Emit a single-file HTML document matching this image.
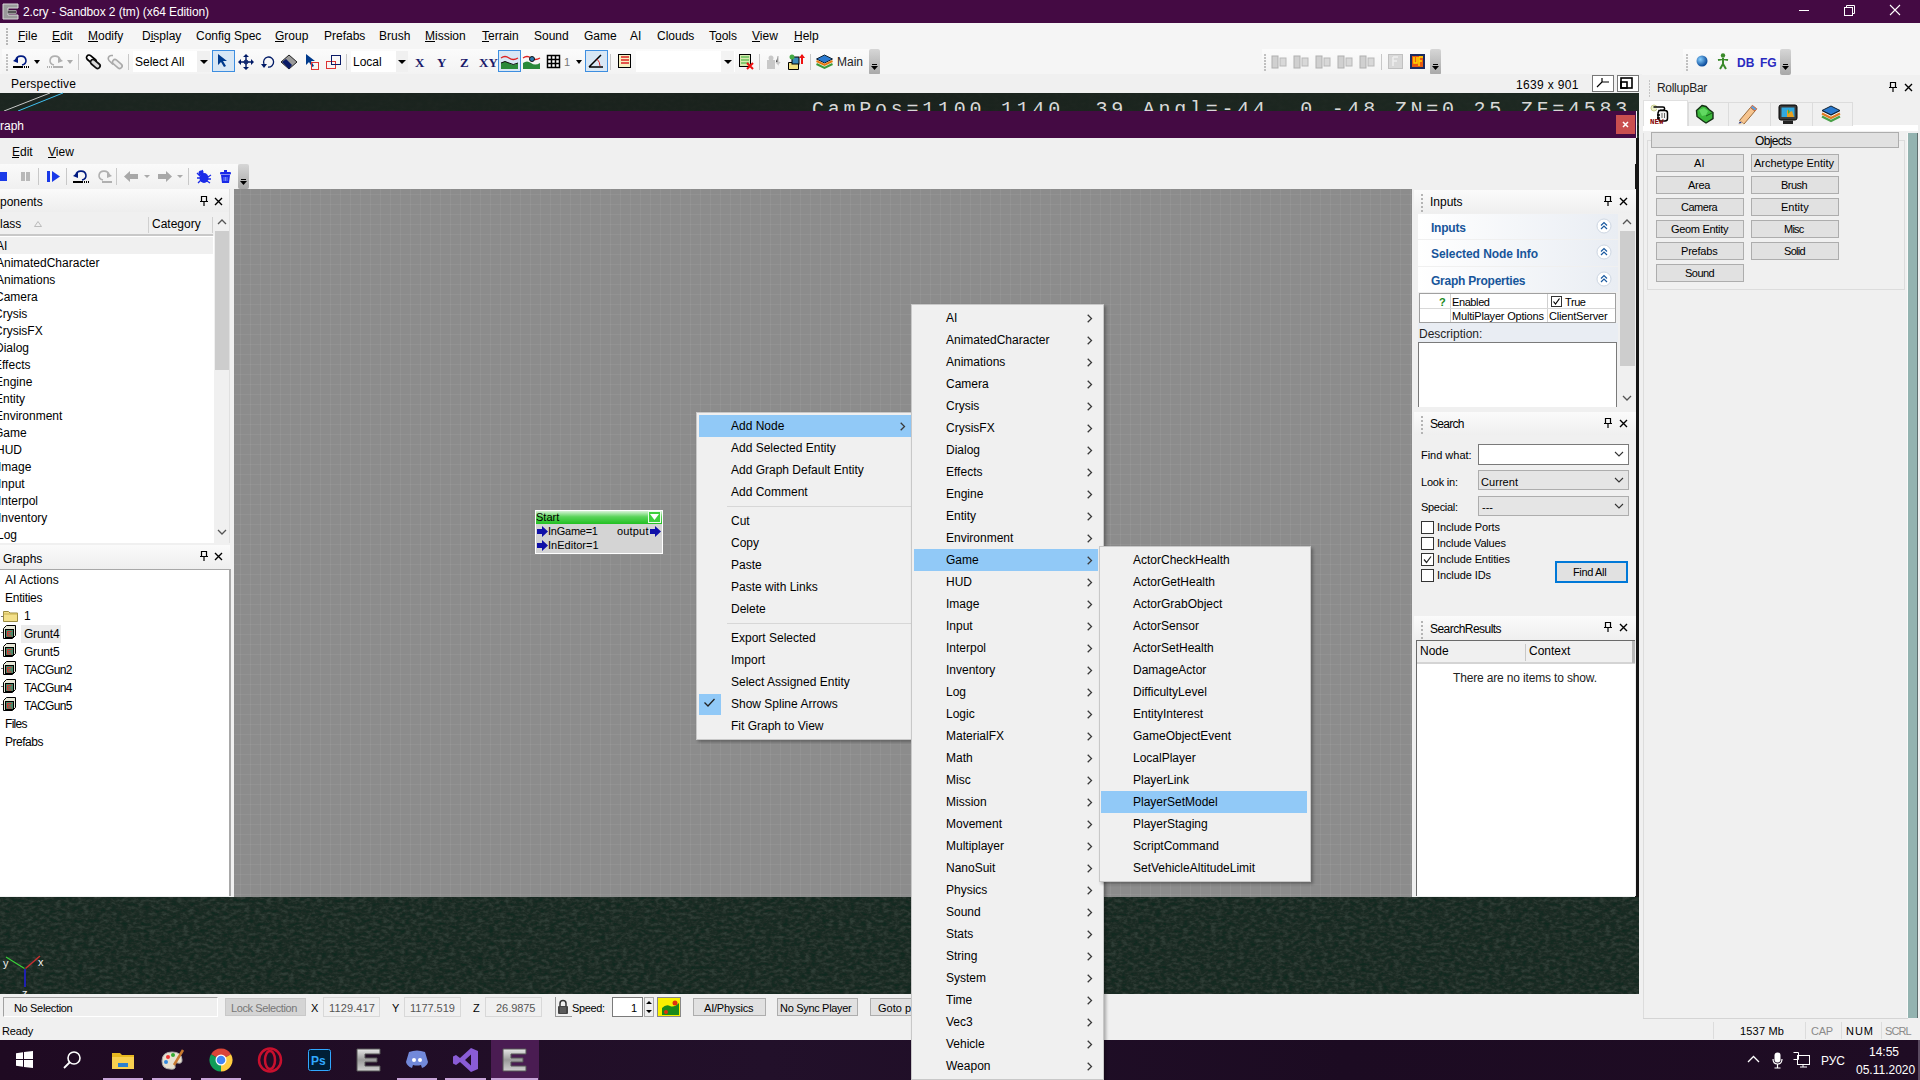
<!DOCTYPE html>
<html><head><meta charset="utf-8"><style>*{box-sizing:border-box;margin:0;padding:0}
html,body{width:1920px;height:1080px;overflow:hidden;background:#f0f0f0;font-family:"Liberation Sans",sans-serif;font-size:12px;color:#000}
.a{position:absolute;overflow:hidden}
svg.a{overflow:visible}
.t{position:absolute;white-space:nowrap;line-height:14px}
</style></head><body>
<div class="a" style="left:0px;top:0px;width:1920px;height:23px;background:#440a43"></div>
<svg class="a" style="left:2px;top:3px;" width="17" height="17" viewBox="0 0 17 17"><path d="M1 1h15v4H6v2.5h8v3H6V12h10v4H1z" fill="#9a9a9a" stroke="#d8d8d8" stroke-width="1"/><path d="M6 7.5h8v3H6z" fill="#555"/></svg>
<div class="t" style="left:23px;top:5px;letter-spacing:-0.096px;color:#fff;">2.cry - Sandbox 2 (tm) (x64 Edition)</div>
<div class="a" style="left:1799px;top:10px;width:10px;height:1px;background:#fff"></div>
<svg class="a" style="left:1843px;top:4px;" width="13" height="13" viewBox="0 0 13 13"><rect x="1.5" y="3.5" width="8" height="8" fill="none" stroke="#fff"/><path d="M3.5 3.5V1.5h8v8h-2" fill="none" stroke="#fff"/></svg>
<svg class="a" style="left:1889px;top:4px;" width="12" height="12" viewBox="0 0 12 12"><path d="M1 1L11 11M11 1L1 11" stroke="#fff" stroke-width="1.1"/></svg>
<div class="a" style="left:0px;top:23px;width:1920px;height:26px;background:#f5f5f5"></div>
<div class="a" style="left:6px;top:28px;width:2px;height:2px;background:#b8b8b8"></div>
<div class="a" style="left:6px;top:31px;width:2px;height:2px;background:#b8b8b8"></div>
<div class="a" style="left:6px;top:34px;width:2px;height:2px;background:#b8b8b8"></div>
<div class="a" style="left:6px;top:37px;width:2px;height:2px;background:#b8b8b8"></div>
<div class="a" style="left:6px;top:40px;width:2px;height:2px;background:#b8b8b8"></div>
<div class="a" style="left:6px;top:43px;width:2px;height:2px;background:#b8b8b8"></div>
<div class="t" style="left:18px;top:29px;">File</div>
<div class="a" style="left:18px;top:41px;width:7px;height:1px;background:#000"></div>
<div class="t" style="left:52px;top:29px;">Edit</div>
<div class="a" style="left:52px;top:41px;width:8px;height:1px;background:#000"></div>
<div class="t" style="left:88px;top:29px;">Modify</div>
<div class="a" style="left:88px;top:41px;width:10px;height:1px;background:#000"></div>
<div class="t" style="left:142px;top:29px;">Display</div>
<div class="a" style="left:150px;top:41px;width:5px;height:1px;background:#000"></div>
<div class="t" style="left:196px;top:29px;">Config Spec</div>
<div class="t" style="left:275px;top:29px;">Group</div>
<div class="a" style="left:275px;top:41px;width:9px;height:1px;background:#000"></div>
<div class="t" style="left:324px;top:29px;">Prefabs</div>
<div class="t" style="left:379px;top:29px;">Brush</div>
<div class="t" style="left:425px;top:29px;">Mission</div>
<div class="a" style="left:425px;top:41px;width:10px;height:1px;background:#000"></div>
<div class="t" style="left:482px;top:29px;">Terrain</div>
<div class="a" style="left:482px;top:41px;width:7px;height:1px;background:#000"></div>
<div class="t" style="left:534px;top:29px;">Sound</div>
<div class="t" style="left:584px;top:29px;">Game</div>
<div class="t" style="left:630px;top:29px;">AI</div>
<div class="t" style="left:657px;top:29px;">Clouds</div>
<div class="t" style="left:709px;top:29px;">Tools</div>
<div class="a" style="left:716px;top:41px;width:6px;height:1px;background:#000"></div>
<div class="t" style="left:752px;top:29px;">View</div>
<div class="a" style="left:752px;top:41px;width:8px;height:1px;background:#000"></div>
<div class="t" style="left:794px;top:29px;">Help</div>
<div class="a" style="left:794px;top:41px;width:8px;height:1px;background:#000"></div>
<div class="a" style="left:0px;top:49px;width:1920px;height:26px;background:#f5f5f5"></div>
<div class="a" style="left:2px;top:49px;width:878px;height:25px;background:linear-gradient(#fbfbfb,#f3f3f3)"></div>
<div class="a" style="left:1262px;top:49px;width:178px;height:25px;background:linear-gradient(#fbfbfb,#f3f3f3)"></div>
<div class="a" style="left:1683px;top:49px;width:107px;height:25px;background:linear-gradient(#fbfbfb,#f3f3f3)"></div>
<div class="a" style="left:869px;top:49px;width:11px;height:26px;background:linear-gradient(#d6d6d6,#a8a8a8);border-radius:2px"></div>
<div class="a" style="left:872px;top:64px;width:5px;height:1px;background:#000"></div>
<svg class="a" style="left:871px;top:66px;" width="7" height="4" viewBox="0 0 7 4"><path d="M0 0h7L3.5 4z" fill="#000"/></svg>
<div class="a" style="left:1430px;top:49px;width:11px;height:26px;background:linear-gradient(#d6d6d6,#a8a8a8);border-radius:2px"></div>
<div class="a" style="left:1433px;top:64px;width:5px;height:1px;background:#000"></div>
<svg class="a" style="left:1432px;top:66px;" width="7" height="4" viewBox="0 0 7 4"><path d="M0 0h7L3.5 4z" fill="#000"/></svg>
<div class="a" style="left:1780px;top:49px;width:11px;height:26px;background:linear-gradient(#d6d6d6,#a8a8a8);border-radius:2px"></div>
<div class="a" style="left:1783px;top:64px;width:5px;height:1px;background:#000"></div>
<svg class="a" style="left:1782px;top:66px;" width="7" height="4" viewBox="0 0 7 4"><path d="M0 0h7L3.5 4z" fill="#000"/></svg>
<div class="a" style="left:6px;top:54px;width:2px;height:2px;background:#c0c0c0"></div>
<div class="a" style="left:6px;top:57px;width:2px;height:2px;background:#c0c0c0"></div>
<div class="a" style="left:6px;top:60px;width:2px;height:2px;background:#c0c0c0"></div>
<div class="a" style="left:6px;top:63px;width:2px;height:2px;background:#c0c0c0"></div>
<div class="a" style="left:6px;top:66px;width:2px;height:2px;background:#c0c0c0"></div>
<div class="a" style="left:6px;top:69px;width:2px;height:2px;background:#c0c0c0"></div>
<div class="a" style="left:1264px;top:54px;width:2px;height:2px;background:#c0c0c0"></div>
<div class="a" style="left:1264px;top:57px;width:2px;height:2px;background:#c0c0c0"></div>
<div class="a" style="left:1264px;top:60px;width:2px;height:2px;background:#c0c0c0"></div>
<div class="a" style="left:1264px;top:63px;width:2px;height:2px;background:#c0c0c0"></div>
<div class="a" style="left:1264px;top:66px;width:2px;height:2px;background:#c0c0c0"></div>
<div class="a" style="left:1264px;top:69px;width:2px;height:2px;background:#c0c0c0"></div>
<div class="a" style="left:1686px;top:54px;width:2px;height:2px;background:#c0c0c0"></div>
<div class="a" style="left:1686px;top:57px;width:2px;height:2px;background:#c0c0c0"></div>
<div class="a" style="left:1686px;top:60px;width:2px;height:2px;background:#c0c0c0"></div>
<div class="a" style="left:1686px;top:63px;width:2px;height:2px;background:#c0c0c0"></div>
<div class="a" style="left:1686px;top:66px;width:2px;height:2px;background:#c0c0c0"></div>
<div class="a" style="left:1686px;top:69px;width:2px;height:2px;background:#c0c0c0"></div>
<div class="a" style="left:78px;top:54px;width:1px;height:16px;background:#c8c8c8"></div>
<div class="a" style="left:128px;top:54px;width:1px;height:16px;background:#c8c8c8"></div>
<div class="a" style="left:346px;top:54px;width:1px;height:16px;background:#c8c8c8"></div>
<div class="a" style="left:610px;top:54px;width:1px;height:16px;background:#c8c8c8"></div>
<div class="a" style="left:759px;top:54px;width:1px;height:16px;background:#c8c8c8"></div>
<div class="a" style="left:810px;top:54px;width:1px;height:16px;background:#c8c8c8"></div>
<div class="a" style="left:1381px;top:54px;width:1px;height:16px;background:#c8c8c8"></div>
<svg class="a" style="left:13px;top:55px;" width="16" height="13" viewBox="0 0 16 13"><path d="M3 5 A5 4.5 0 1 1 9 10" fill="none" stroke="#001a80" stroke-width="1.6"/><path d="M0 6l5-4v6z" fill="#001a80"/><path d="M0 12h10" stroke="#000" stroke-width="2"/><path d="M11 12h5" stroke="#000" stroke-width="2" stroke-dasharray="1 1"/></svg>
<svg class="a" style="left:34px;top:60px;" width="6" height="4" viewBox="0 0 6 4"><path d="M0 0h6L3 4z" fill="#000"/></svg>
<svg class="a" style="left:47px;top:55px;" width="16" height="13" viewBox="0 0 16 13"><path d="M13 5 A5 4.5 0 1 0 7 10" fill="none" stroke="#b0b0b0" stroke-width="1.6"/><path d="M16 6l-5-4v6z" fill="#b0b0b0"/><path d="M6 12h10" stroke="#b0b0b0" stroke-width="2"/><path d="M0 12h5" stroke="#b0b0b0" stroke-width="2" stroke-dasharray="1 1"/></svg>
<svg class="a" style="left:67px;top:60px;" width="6" height="4" viewBox="0 0 6 4"><path d="M0 0h6L3 4z" fill="#aaa"/></svg>
<svg class="a" style="left:85px;top:54px;" width="17" height="16" viewBox="0 0 17 16"><rect x="0.8" y="3" width="11" height="5" rx="2.5" transform="rotate(40 6.3 5.5)" fill="#fff" stroke="#000" stroke-width="1.7"/><rect x="4.8" y="7.5" width="11" height="5" rx="2.5" transform="rotate(40 10.3 10)" fill="#ddd" stroke="#111" stroke-width="1.7"/></svg>
<svg class="a" style="left:107px;top:54px;" width="17" height="16" viewBox="0 0 17 16"><path d="M6 1.5h-2a3 3 0 0 0-2 5l4 4" fill="none" stroke="#a8a8a8" stroke-width="1.6"/><rect x="4.8" y="7.5" width="11" height="5" rx="2.5" transform="rotate(40 10.3 10)" fill="#eee" stroke="#aaa" stroke-width="1.6"/></svg>
<div class="a" style="left:133px;top:51px;width:77px;height:21px;background:#fff"></div>
<div class="a" style="left:197px;top:51px;width:13px;height:21px;background:#f0f0f0"></div>
<div class="t" style="left:135px;top:55px;">Select All</div>
<svg class="a" style="left:200px;top:60px;" width="8" height="4" viewBox="0 0 8 4"><path d="M0 0h8L4 4z" fill="#000"/></svg>
<div class="a" style="left:212px;top:50px;width:23px;height:22px;background:#d8e7f5;border:1px solid #3d8ee0"></div>
<svg class="a" style="left:217px;top:54px;" width="12" height="14" viewBox="0 0 12 14"><path d="M1 0v11l3-3 3 5 2-1-3-5h4z" fill="#003a8c"/></svg>
<svg class="a" style="left:238px;top:54px;" width="16" height="16" viewBox="0 0 16 16"><path d="M8 1v14M1 8h14" stroke="#001a66" stroke-width="1.4"/><path d="M8 0l-3 3h6zM8 16l-3-3h6zM0 8l3-3v6zM16 8l-3-3v6z" fill="#001a66"/><circle cx="8" cy="8" r="2" fill="none" stroke="#001a66"/></svg>
<svg class="a" style="left:261px;top:55px;" width="14" height="14" viewBox="0 0 14 14"><path d="M3 9 A5 5 0 1 1 7 12" fill="none" stroke="#001a66" stroke-width="1.3"/><path d="M0 9l3 4 3-4z" fill="#001a66"/></svg>
<svg class="a" style="left:281px;top:54px;" width="17" height="16" viewBox="0 0 17 16"><path d="M8 1l8 7-8 7-8-7z" fill="#9a9a9a" stroke="#222"/><path d="M1 8l4-3 6 6-3 4z" fill="#0a1a66"/></svg>
<svg class="a" style="left:305px;top:54px;" width="14" height="16" viewBox="0 0 14 16"><path d="M1 0v11l3-3 3 5 2-1-3-5h4z" fill="#003a8c"/><rect x="6.5" y="8.5" width="7" height="7" fill="none" stroke="#d33"/></svg>
<svg class="a" style="left:326px;top:55px;" width="15" height="14" viewBox="0 0 15 14"><rect x="0.5" y="6.5" width="9" height="7" fill="none" stroke="#d33"/><rect x="5.5" y="0.5" width="9" height="9" fill="none" stroke="#0a1a66"/></svg>
<div class="a" style="left:351px;top:51px;width:57px;height:21px;background:#fff"></div>
<div class="a" style="left:396px;top:51px;width:12px;height:21px;background:#f0f0f0"></div>
<div class="t" style="left:353px;top:55px;">Local</div>
<svg class="a" style="left:398px;top:60px;" width="8" height="4" viewBox="0 0 8 4"><path d="M0 0h8L4 4z" fill="#000"/></svg>
<div class="t" style="left:415px;top:56px;color:#1a1a6a;font-size:13px;font-weight:bold;font-family:'Liberation Serif',serif;">X</div>
<div class="t" style="left:437px;top:56px;color:#1a1a6a;font-size:13px;font-weight:bold;font-family:'Liberation Serif',serif;">Y</div>
<div class="t" style="left:460px;top:56px;color:#1a1a6a;font-size:13px;font-weight:bold;font-family:'Liberation Serif',serif;">Z</div>
<div class="t" style="left:479px;top:56px;color:#1a1a6a;font-size:13px;font-weight:bold;font-family:'Liberation Serif',serif;">XY</div>
<div class="a" style="left:498px;top:50px;width:23px;height:22px;background:#d8e7f5;border:1px solid #3d8ee0"></div>
<svg class="a" style="left:501px;top:55px;" width="17" height="14" viewBox="0 0 17 14"><path d="M0 3q4-3 8 0t9 0" fill="none" stroke="#d22" stroke-width="1.3"/><path d="M0 8q4-3 8 0t9 0V14H0z" fill="#2a8a3a"/><path d="M0 8q4-3 8 0t9 0" fill="none" stroke="#111" stroke-width="1"/></svg>
<svg class="a" style="left:523px;top:54px;" width="17" height="15" viewBox="0 0 17 15"><path d="M0 4q4-3 8 0t9 0" fill="none" stroke="#d22" stroke-width="1.3"/><path d="M0 9q4-3 8 0t9 0V15H0z" fill="#2a8a3a"/><circle cx="9" cy="5" r="2.5" fill="#2a7ab0" stroke="#111"/></svg>
<svg class="a" style="left:547px;top:55px;" width="15" height="14" viewBox="0 0 15 14"><rect x="0.5" y="0.5" width="12" height="12" fill="#fff" stroke="#000" stroke-width="1.5"/><path d="M4.5 0v13M8.5 0v13M0 4.5h13M0 8.5h13" stroke="#000" stroke-width="1.5"/></svg>
<div class="t" style="left:564px;top:55px;color:#777;font-size:11px;">1</div>
<svg class="a" style="left:576px;top:60px;" width="6" height="4" viewBox="0 0 6 4"><path d="M0 0h6L3 4z" fill="#000"/></svg>
<div class="a" style="left:585px;top:50px;width:23px;height:22px;background:#d8e7f5;border:1px solid #3d8ee0"></div>
<svg class="a" style="left:588px;top:54px;" width="16" height="15" viewBox="0 0 16 15"><path d="M1 13L13 1M1 13h14" stroke="#000" stroke-width="1.5"/><path d="M9 5q3 3 3 7" fill="none" stroke="#d22"/></svg>
<svg class="a" style="left:618px;top:54px;" width="14" height="15" viewBox="0 0 14 15"><rect x="0.5" y="0.5" width="12" height="13" fill="#f6efc0" stroke="#000"/><path d="M3 3h8M3 6h8M3 9h8" stroke="#d22" stroke-width="1.5"/></svg>
<div class="a" style="left:636px;top:51px;width:99px;height:21px;background:#fff"></div>
<div class="a" style="left:721px;top:51px;width:13px;height:21px;background:#f3f3f3"></div>
<svg class="a" style="left:724px;top:60px;" width="8" height="4" viewBox="0 0 8 4"><path d="M0 0h8L4 4z" fill="#000"/></svg>
<svg class="a" style="left:739px;top:54px;" width="16" height="16" viewBox="0 0 16 16"><rect x="0.5" y="0.5" width="11" height="12" fill="#d8eab0" stroke="#000"/><path d="M2 3h8M2 6h8M2 9h8" stroke="#3a3" stroke-width="1"/><path d="M8 9l6 6M14 9l-6 6" stroke="#e11" stroke-width="2"/></svg>
<svg class="a" style="left:766px;top:54px;" width="16" height="16" viewBox="0 0 16 16"><rect x="1" y="6" width="8" height="9" fill="#c8c8c8"/><circle cx="5" cy="4" r="2.5" fill="#c8c8c8"/><path d="M12 2v8l-2-2M12 10l2-2" stroke="#c8c8c8" stroke-width="1.5"/></svg>
<svg class="a" style="left:788px;top:54px;" width="17" height="16" viewBox="0 0 17 16"><path d="M0.5 8.5h10v7h-10z" fill="#f0e080" stroke="#000"/><rect x="4" y="3" width="7" height="7" fill="#3a8ab8" stroke="#000"/><circle cx="4" cy="3" r="2.5" fill="#4a4"/><path d="M14 1v9" stroke="#e11" stroke-width="2"/><path d="M14 0l-3 4h6z" fill="#e11"/></svg>
<svg class="a" style="left:816px;top:54px;" width="17" height="16" viewBox="0 0 17 16"><path d="M8.5 1l8 4-8 4-8-4z" fill="#2a7ad0" stroke="#123"/><path d="M0.5 7l8 4 8-4" fill="none" stroke="#e77a10" stroke-width="2"/><path d="M0.5 10l8 4 8-4" fill="none" stroke="#3a9a3a" stroke-width="2"/></svg>
<div class="t" style="left:837px;top:55px;color:#222;">Main</div>
<svg class="a" style="left:1271px;top:54px;" width="16" height="16" viewBox="0 0 16 16"><rect x="1" y="2" width="6" height="12" fill="#d0d0d0" stroke="#b0b0b0"/><rect x="9" y="4" width="6" height="8" fill="#d8d8d8" stroke="#b8b8b8"/></svg>
<svg class="a" style="left:1293px;top:54px;" width="16" height="16" viewBox="0 0 16 16"><rect x="1" y="2" width="6" height="12" fill="#d0d0d0" stroke="#b0b0b0"/><rect x="9" y="4" width="6" height="8" fill="#d8d8d8" stroke="#b8b8b8"/></svg>
<svg class="a" style="left:1315px;top:54px;" width="16" height="16" viewBox="0 0 16 16"><rect x="1" y="2" width="6" height="12" fill="#d0d0d0" stroke="#b0b0b0"/><rect x="9" y="4" width="6" height="8" fill="#d8d8d8" stroke="#b8b8b8"/></svg>
<svg class="a" style="left:1337px;top:54px;" width="16" height="16" viewBox="0 0 16 16"><rect x="1" y="2" width="6" height="12" fill="#d0d0d0" stroke="#b0b0b0"/><rect x="9" y="4" width="6" height="8" fill="#d8d8d8" stroke="#b8b8b8"/></svg>
<svg class="a" style="left:1359px;top:54px;" width="16" height="16" viewBox="0 0 16 16"><rect x="1" y="2" width="6" height="12" fill="#d0d0d0" stroke="#b0b0b0"/><rect x="9" y="4" width="6" height="8" fill="#d8d8d8" stroke="#b8b8b8"/></svg>
<svg class="a" style="left:1388px;top:54px;" width="15" height="15" viewBox="0 0 15 15"><rect x="0.5" y="0.5" width="14" height="14" fill="#d8d8d8" stroke="#c0c0c0"/><path d="M5 3h5M5 3v9M5 7h4" stroke="#eee" stroke-width="1.5"/></svg>
<svg class="a" style="left:1410px;top:54px;" width="15" height="15" viewBox="0 0 15 15"><rect x="0" y="0" width="15" height="15" fill="#1a2a60"/><rect x="2" y="2" width="11" height="11" fill="#e85a10"/><path d="M4 3v6h3V3M9 3h4M9 3v9M9 7h3" stroke="#ffd800" stroke-width="1.5" fill="none"/></svg>
<svg class="a" style="left:1696px;top:55px;" width="12" height="12" viewBox="0 0 12 12"><defs><radialGradient id="gl" cx="35%" cy="35%" r="65%"><stop offset="0" stop-color="#8ad0ff"/><stop offset="1" stop-color="#0a4a9a"/></radialGradient></defs><circle cx="6" cy="6" r="5.5" fill="url(#gl)"/></svg>
<svg class="a" style="left:1717px;top:53px;" width="12" height="16" viewBox="0 0 12 16"><circle cx="6" cy="2.5" r="2.2" fill="#3a8a2a"/><path d="M6 5v6M1 7l5-1 5 1M6 11l-3 5M6 11l3 5" stroke="#3a8a2a" stroke-width="2" fill="none"/></svg>
<div class="t" style="left:1737px;top:56px;color:#2a2ac0;font-weight:bold;">DB</div>
<div class="t" style="left:1760px;top:56px;color:#2a2ac0;font-weight:bold;">FG</div>
<div class="a" style="left:0px;top:74px;width:1642px;height:19px;background:#f0f0f0"></div>
<div class="t" style="left:11px;top:77px;letter-spacing:0.231px;">Perspective</div>
<div class="t" style="left:1516px;top:78px;letter-spacing:0.349px;">1639 x 901</div>
<div class="a" style="left:1592px;top:75px;width:22px;height:17px;background:#fff;border:1px solid #777"></div>
<svg class="a" style="left:1596px;top:77px;" width="14" height="12" viewBox="0 0 14 12"><path d="M6 1v4H13M6 5L1 10" stroke="#000" stroke-width="1.2" fill="none"/></svg>
<div class="a" style="left:1617px;top:75px;width:22px;height:17px;background:#fff;border:1px solid #777"></div>
<svg class="a" style="left:1620px;top:77px;" width="15" height="12" viewBox="0 0 15 12"><rect x="1" y="1" width="11" height="10" fill="none" stroke="#000" stroke-width="1.6"/><rect x="1" y="5" width="6" height="6" fill="none" stroke="#000" stroke-width="1.6"/></svg>
<div class="a" style="left:0px;top:93px;width:1639px;height:901px;background-color:#1e2c25"></div>
<svg class="a" style="left:0px;top:93px;" width="1639" height="901" viewBox="0 0 1639 901"><filter id="nz" x="0" y="0" width="100%" height="100%"><feTurbulence type="fractalNoise" baseFrequency="0.18 0.3" numOctaves="3" seed="5"/><feColorMatrix type="matrix" values="0 0 0 0 0  0 0 0 0 0.02  0 0 0 0 0.01  3 0 0 0 -1.45"/></filter><filter id="nz2" x="0" y="0" width="100%" height="100%"><feTurbulence type="fractalNoise" baseFrequency="0.18 0.3" numOctaves="3" seed="5"/><feColorMatrix type="matrix" values="0 0 0 0 0.35  0 0 0 0 0.45  0 0 0 0 0.4  -3 0 0 0 1.55"/></filter><rect width="1640" height="901" filter="url(#nz)" opacity=".5"/><rect width="1640" height="901" filter="url(#nz2)" opacity=".14"/></svg>
<div class="a" style="left:0px;top:93px;width:1639px;height:18px;background:linear-gradient(90deg,#1c2520,#1a211c 50%,#1e2922);opacity:.9"></div>
<svg class="a" style="left:0px;top:93px;" width="80" height="18" viewBox="0 0 80 18"><path d="M4 18L50 0" stroke="#c8c8c8" stroke-width="1"/><path d="M18 18L63 0" stroke="#40c0f0" stroke-width="1"/></svg>
<div class="t" style="left:812px;top:99px;height:14px;overflow:hidden;line-height:22px;font-family:'Liberation Mono',monospace;font-size:20px;letter-spacing:3.75px;white-space:pre;color:#d8d8d8">CamPos=1100 1140  39 Angl=-44  0 -48 ZN=0 25 ZF=4583</div>
<svg class="a" style="left:0px;top:946px;" width="50" height="50" viewBox="0 0 50 50"><path d="M24.5 22.5L6 11" stroke="#3ad03a" stroke-width="1.2"/><path d="M25.5 22.5L40 10" stroke="#c83030" stroke-width="1.5"/><path d="M25 23V41" stroke="#2020b0" stroke-width="2"/><text x="3" y="21" fill="#f0f0f0" font-size="11" font-family="Liberation Sans">y</text><text x="38" y="20" fill="#f0f0f0" font-size="11" font-family="Liberation Sans">x</text><text x="22" y="51" fill="#f0f0f0" font-size="11" font-family="Liberation Sans">z</text></svg>
<div class="a" style="left:0px;top:111px;width:1637px;height:786px;background:#f0f0f0"></div>
<div class="a" style="left:1635px;top:138px;width:4px;height:759px;background:#151515"></div>
<div class="a" style="left:0px;top:111px;width:1636px;height:27px;background:#440a43"></div>
<div class="t" style="left:0px;top:119px;color:#fff;">raph</div>
<div class="a" style="left:1616px;top:115px;width:19px;height:19px;background:#c94f4f"></div>
<svg class="a" style="left:1622px;top:121px;" width="7" height="7" viewBox="0 0 7 7"><path d="M1 1L6 6M6 1L1 6" stroke="#fff" stroke-width="1.5"/></svg>
<div class="a" style="left:0px;top:138px;width:1636px;height:26px;background:#f0f0f0"></div>
<div class="t" style="left:12px;top:145px;">Edit</div>
<div class="a" style="left:12px;top:157px;width:7px;height:1px;background:#000"></div>
<div class="t" style="left:48px;top:145px;">View</div>
<div class="a" style="left:48px;top:157px;width:8px;height:1px;background:#000"></div>
<div class="a" style="left:0px;top:164px;width:238px;height:25px;background:linear-gradient(#fafafa,#f0f0f0)"></div>
<div class="a" style="left:238px;top:164px;width:11px;height:25px;background:linear-gradient(#d6d6d6,#a8a8a8);border-radius:2px"></div>
<div class="a" style="left:241px;top:179px;width:5px;height:1px;background:#000"></div>
<svg class="a" style="left:240px;top:181px;" width="7" height="4" viewBox="0 0 7 4"><path d="M0 0h7L3.5 4z" fill="#000"/></svg>
<div class="a" style="left:0px;top:172px;width:7px;height:9px;background:#1a3ae8"></div>
<div class="a" style="left:21px;top:172px;width:4px;height:9px;background:#b8b8b8"></div>
<div class="a" style="left:26px;top:172px;width:4px;height:9px;background:#b8b8b8"></div>
<div class="a" style="left:38px;top:168px;width:1px;height:17px;background:#c8c8c8"></div>
<div class="a" style="left:66px;top:168px;width:1px;height:17px;background:#c8c8c8"></div>
<div class="a" style="left:116px;top:168px;width:1px;height:17px;background:#c8c8c8"></div>
<div class="a" style="left:188px;top:168px;width:1px;height:17px;background:#c8c8c8"></div>
<svg class="a" style="left:47px;top:171px;" width="13" height="11" viewBox="0 0 13 11"><path d="M0 0h3v11H0z M5 0l8 5.5L5 11z" fill="#1a3ae8"/></svg>
<svg class="a" style="left:73px;top:170px;" width="16" height="13" viewBox="0 0 16 13"><path d="M3 5 A5 4.5 0 1 1 9 10" fill="none" stroke="#001a80" stroke-width="1.6"/><path d="M0 6l5-4v6z" fill="#001a80"/><path d="M0 12h10" stroke="#000" stroke-width="2"/><path d="M11 12h5" stroke="#000" stroke-width="2" stroke-dasharray="1 1"/></svg>
<svg class="a" style="left:96px;top:170px;" width="16" height="13" viewBox="0 0 16 13"><path d="M13 5 A5 4.5 0 1 0 7 10" fill="none" stroke="#b0b0b0" stroke-width="1.6"/><path d="M16 6l-5-4v6z" fill="#b0b0b0"/><path d="M6 12h10" stroke="#b0b0b0" stroke-width="2"/></svg>
<svg class="a" style="left:124px;top:171px;" width="14" height="11" viewBox="0 0 14 11"><path d="M0 5.5L6 0v3h8v5H6v3z" fill="#a8a8a8"/></svg>
<svg class="a" style="left:144px;top:175px;" width="6" height="3" viewBox="0 0 6 3"><path d="M0 0h6L3 3z" fill="#aaa"/></svg>
<svg class="a" style="left:158px;top:171px;" width="14" height="11" viewBox="0 0 14 11"><path d="M14 5.5L8 0v3H0v5h8v3z" fill="#a8a8a8"/></svg>
<svg class="a" style="left:177px;top:175px;" width="6" height="3" viewBox="0 0 6 3"><path d="M0 0h6L3 3z" fill="#aaa"/></svg>
<svg class="a" style="left:196px;top:169px;" width="15" height="15" viewBox="0 0 15 15"><ellipse cx="8" cy="9" rx="4.5" ry="5" fill="#1a2ae8"/><circle cx="5" cy="4" r="2.5" fill="#1a2ae8"/><path d="M1 4l3 3M1 9h3M2 14l3-3M15 6l-3 2M15 10h-3M14 14l-3-2M6 1l1 2" stroke="#1a2ae8" stroke-width="1.3"/></svg>
<svg class="a" style="left:219px;top:169px;" width="13" height="14" viewBox="0 0 13 14"><rect x="1" y="3" width="11" height="2.5" rx="1" fill="#1a2ae8"/><rect x="5" y="1" width="3" height="2" fill="#1a2ae8"/><path d="M2 6h9l-1 8H3z" fill="#1a2ae8"/><path d="M5 8v4M6.5 8v4M8 8v4" stroke="#8aa0ff" stroke-width=".8"/></svg>
<div class="a" style="left:0px;top:189px;width:230px;height:23px;background:linear-gradient(#fafafa,#eeeeee)"></div>
<div class="t" style="left:0px;top:195px;">ponents</div>
<svg class="a" style="left:200px;top:196px;" width="8" height="10" viewBox="0 0 8 10"><path d="M1.5 0.5h5v5h-5zM0 5.5h8M4 6v4" fill="none" stroke="#000" stroke-width="1.2"/></svg>
<svg class="a" style="left:214px;top:197px;" width="9" height="9" viewBox="0 0 9 9"><path d="M1 1L8 8M8 1L1 8" stroke="#000" stroke-width="1.4"/></svg>
<div class="a" style="left:0px;top:213px;width:213px;height:21px;background:#f0f0f0"></div>
<div class="a" style="left:0px;top:234px;width:213px;height:2px;background:#c8c8c8"></div>
<div class="t" style="left:0px;top:217px;">lass</div>
<svg class="a" style="left:34px;top:221px;" width="8" height="6" viewBox="0 0 8 6"><path d="M4 0.5L7.5 5.5H0.5z" fill="none" stroke="#bbb"/></svg>
<div class="a" style="left:148px;top:217px;width:1px;height:16px;background:#d0d0d0"></div>
<div class="t" style="left:152px;top:217px;">Category</div>
<div class="a" style="left:212px;top:217px;width:1px;height:16px;background:#d0d0d0"></div>
<div class="a" style="left:0px;top:236px;width:214px;height:307px;background:#fff"></div>
<div class="a" style="left:0px;top:237px;width:213px;height:17px;background:#f0f0f0"></div>
<div class="a" style="left:0;top:236px;width:213px;height:307px;overflow:hidden">
<div class="t" style="left:-4px;top:3px;">AI</div>
<div class="t" style="left:-4px;top:20px;">AnimatedCharacter</div>
<div class="t" style="left:-4px;top:37px;">Animations</div>
<div class="t" style="left:-5px;top:54px;">Camera</div>
<div class="t" style="left:-6px;top:71px;">Crysis</div>
<div class="t" style="left:-6px;top:88px;">CrysisFX</div>
<div class="t" style="left:-5px;top:105px;">Dialog</div>
<div class="t" style="left:-6px;top:122px;">Effects</div>
<div class="t" style="left:-5px;top:139px;">Engine</div>
<div class="t" style="left:-5px;top:156px;">Entity</div>
<div class="t" style="left:-5px;top:173px;">Environment</div>
<div class="t" style="left:-6px;top:190px;">Game</div>
<div class="t" style="left:-4px;top:207px;">HUD</div>
<div class="t" style="left:-2px;top:224px;">Image</div>
<div class="t" style="left:-2px;top:241px;">Input</div>
<div class="t" style="left:-2px;top:258px;">Interpol</div>
<div class="t" style="left:-2px;top:275px;">Inventory</div>
<div class="t" style="left:-3px;top:292px;">Log</div>
</div>
<div class="a" style="left:214px;top:213px;width:16px;height:330px;background:#f0f0f0"></div>
<svg class="a" style="left:217px;top:219px;" width="10" height="6" viewBox="0 0 10 6"><path d="M1 5L5 1l4 4" fill="none" stroke="#555" stroke-width="1.3"/></svg>
<div class="a" style="left:215px;top:231px;width:15px;height:139px;background:#cdcdcd"></div>
<svg class="a" style="left:217px;top:529px;" width="10" height="6" viewBox="0 0 10 6"><path d="M1 1l4 4 4-4" fill="none" stroke="#555" stroke-width="1.3"/></svg>
<div class="a" style="left:229px;top:189px;width:1px;height:354px;background:#e0e0e0"></div>
<div class="a" style="left:0px;top:545px;width:230px;height:24px;background:linear-gradient(#fafafa,#eeeeee)"></div>
<div class="t" style="left:3px;top:552px;">Graphs</div>
<svg class="a" style="left:200px;top:551px;" width="8" height="10" viewBox="0 0 8 10"><path d="M1.5 0.5h5v5h-5zM0 5.5h8M4 6v4" fill="none" stroke="#000" stroke-width="1.2"/></svg>
<svg class="a" style="left:214px;top:552px;" width="9" height="9" viewBox="0 0 9 9"><path d="M1 1L8 8M8 1L1 8" stroke="#000" stroke-width="1.4"/></svg>
<div class="a" style="left:0px;top:569px;width:231px;height:327px;background:#fff;border-right:2px solid #a8a8a8;border-top:1px solid #a8a8a8"></div>
<div class="t" style="left:5px;top:573px;letter-spacing:0.040px;">AI Actions</div>
<div class="t" style="left:5px;top:591px;letter-spacing:-0.263px;">Entities</div>
<svg class="a" style="left:3px;top:609px;" width="15" height="13" viewBox="0 0 15 13"><path d="M0.5 2.5h5l1.5 1.5h7.5v8.5h-14z" fill="#f3e08a" stroke="#9a8a40"/><path d="M0.5 5h14" stroke="#c8b050"/></svg>
<div class="a" style="left:1px;top:616px;width:2px;height:1px;background:#777"></div>
<div class="t" style="left:24px;top:609px;">1</div>
<div class="a" style="left:21px;top:625px;width:40px;height:18px;background:#ececec"></div>
<svg class="a" style="left:3px;top:625px;" width="14" height="14" viewBox="0 0 14 14"><path d="M0.5 3.5l3-3h9v10l-3 3h-9z" fill="#e8e8d8" stroke="#000"/><rect x="2.5" y="4.5" width="8" height="8" fill="#4a8a6a" stroke="#000"/><path d="M4.5 6.5h4M4.5 6.5v4.5h4M4.5 8.7h3" stroke="#d33" stroke-width="1" fill="none"/></svg>
<div class="a" style="left:1px;top:632px;width:2px;height:1px;background:#777"></div>
<div class="t" style="left:24px;top:627px;letter-spacing:-0.214px;">Grunt4</div>
<svg class="a" style="left:3px;top:643px;" width="14" height="14" viewBox="0 0 14 14"><path d="M0.5 3.5l3-3h9v10l-3 3h-9z" fill="#e8e8d8" stroke="#000"/><rect x="2.5" y="4.5" width="8" height="8" fill="#4a8a6a" stroke="#000"/><path d="M4.5 6.5h4M4.5 6.5v4.5h4M4.5 8.7h3" stroke="#d33" stroke-width="1" fill="none"/></svg>
<div class="a" style="left:1px;top:650px;width:2px;height:1px;background:#777"></div>
<div class="t" style="left:24px;top:645px;letter-spacing:-0.214px;">Grunt5</div>
<svg class="a" style="left:3px;top:661px;" width="14" height="14" viewBox="0 0 14 14"><path d="M0.5 3.5l3-3h9v10l-3 3h-9z" fill="#e8e8d8" stroke="#000"/><rect x="2.5" y="4.5" width="8" height="8" fill="#4a8a6a" stroke="#000"/><path d="M4.5 6.5h4M4.5 6.5v4.5h4M4.5 8.7h3" stroke="#d33" stroke-width="1" fill="none"/></svg>
<div class="a" style="left:1px;top:668px;width:2px;height:1px;background:#777"></div>
<div class="t" style="left:24px;top:663px;letter-spacing:-0.692px;">TACGun2</div>
<svg class="a" style="left:3px;top:679px;" width="14" height="14" viewBox="0 0 14 14"><path d="M0.5 3.5l3-3h9v10l-3 3h-9z" fill="#e8e8d8" stroke="#000"/><rect x="2.5" y="4.5" width="8" height="8" fill="#4a8a6a" stroke="#000"/><path d="M4.5 6.5h4M4.5 6.5v4.5h4M4.5 8.7h3" stroke="#d33" stroke-width="1" fill="none"/></svg>
<div class="a" style="left:1px;top:686px;width:2px;height:1px;background:#777"></div>
<div class="t" style="left:24px;top:681px;letter-spacing:-0.692px;">TACGun4</div>
<svg class="a" style="left:3px;top:697px;" width="14" height="14" viewBox="0 0 14 14"><path d="M0.5 3.5l3-3h9v10l-3 3h-9z" fill="#e8e8d8" stroke="#000"/><rect x="2.5" y="4.5" width="8" height="8" fill="#4a8a6a" stroke="#000"/><path d="M4.5 6.5h4M4.5 6.5v4.5h4M4.5 8.7h3" stroke="#d33" stroke-width="1" fill="none"/></svg>
<div class="a" style="left:1px;top:704px;width:2px;height:1px;background:#777"></div>
<div class="t" style="left:24px;top:699px;letter-spacing:-0.692px;">TACGun5</div>
<div class="t" style="left:5px;top:717px;letter-spacing:-0.686px;">Files</div>
<div class="t" style="left:5px;top:735px;letter-spacing:-0.474px;">Prefabs</div>
<div class="a" style="left:234px;top:189px;width:1178px;height:708px;background-color:#8c8c8c;background-image:linear-gradient(rgba(255,255,255,.05) 1px,transparent 1px),linear-gradient(90deg,rgba(255,255,255,.05) 1px,transparent 1px);background-size:10px 10px;background-position:6px 5px"></div>
<div class="a" style="left:535px;top:510px;width:128px;height:44px;background:#fff"></div>
<div class="a" style="left:536px;top:511px;width:126px;height:13px;background:linear-gradient(#d8f4d8 0%,#5ad45a 45%,#22c022 100%)"></div>
<div class="a" style="left:536px;top:524px;width:126px;height:29px;background:#d4d4d4"></div>
<div class="t" style="left:536px;top:510px;font-size:11px;">Start</div>
<div class="a" style="left:648px;top:511px;width:13px;height:12px;border:1px solid #e8ffe8;background:#3ccf3c"></div>
<svg class="a" style="left:650px;top:514px;" width="9" height="6" viewBox="0 0 9 6"><path d="M0 0h9L4.5 6z" fill="#fff"/></svg>
<svg class="a" style="left:537px;top:526px;" width="11" height="11" viewBox="0 0 11 11"><path d="M0 3h5V0l6 5.5-6 5.5V8H0z" fill="#1010a8"/></svg>
<svg class="a" style="left:537px;top:540px;" width="11" height="11" viewBox="0 0 11 11"><path d="M0 3h5V0l6 5.5-6 5.5V8H0z" fill="#1010a8"/></svg>
<svg class="a" style="left:650px;top:526px;" width="11" height="11" viewBox="0 0 11 11"><path d="M0 3h5V0l6 5.5-6 5.5V8H0z" fill="#1010a8"/></svg>
<div class="t" style="left:548px;top:524px;letter-spacing:-0.243px;font-size:11px;">InGame=1</div>
<div class="t" style="left:617px;top:524px;letter-spacing:0.175px;font-size:11px;">output</div>
<div class="t" style="left:548px;top:538px;letter-spacing:0.013px;font-size:11px;">InEditor=1</div>
<div class="a" style="left:1412px;top:189px;width:224px;height:707px;background:#f0f0f0"></div>
<div class="a" style="left:1414px;top:190px;width:222px;height:23px;background:linear-gradient(#fbfbfb,#efefef)"></div>
<div class="a" style="left:1421px;top:194px;width:2px;height:2px;background:#b4b4b4"></div>
<div class="a" style="left:1421px;top:198px;width:2px;height:2px;background:#b4b4b4"></div>
<div class="a" style="left:1421px;top:202px;width:2px;height:2px;background:#b4b4b4"></div>
<div class="a" style="left:1421px;top:206px;width:2px;height:2px;background:#b4b4b4"></div>
<div class="a" style="left:1421px;top:210px;width:2px;height:2px;background:#b4b4b4"></div>
<div class="t" style="left:1430px;top:195px;letter-spacing:-0.014px;">Inputs</div>
<svg class="a" style="left:1604px;top:196px;" width="8" height="10" viewBox="0 0 8 10"><path d="M1.5 0.5h5v5h-5zM0 5.5h8M4 6v4" fill="none" stroke="#000" stroke-width="1.2"/></svg>
<svg class="a" style="left:1619px;top:197px;" width="9" height="9" viewBox="0 0 9 9"><path d="M1 1L8 8M8 1L1 8" stroke="#000" stroke-width="1.4"/></svg>
<div class="a" style="left:1418px;top:214px;width:200px;height:192px;background:#f0f0f0"></div>
<div class="a" style="left:1418px;top:214px;width:200px;height:25px;background:linear-gradient(90deg,#ffffff,#e9edf3)"></div>
<div class="t" style="left:1431px;top:221px;letter-spacing:-0.237px;color:#17559a;font-weight:bold;">Inputs</div>
<svg class="a" style="left:1596px;top:218px;" width="16" height="16" viewBox="0 0 16 16"><circle cx="8" cy="8" r="7" fill="#fff" stroke="#cdd6e2"/><path d="M5 7.5l3-3 3 3M5 11l3-3 3 3" fill="none" stroke="#1a5aa0" stroke-width="1.2"/></svg>
<div class="a" style="left:1418px;top:240px;width:200px;height:26px;background:linear-gradient(90deg,#ffffff,#e9edf3)"></div>
<div class="t" style="left:1431px;top:247px;letter-spacing:-0.058px;color:#17559a;font-weight:bold;">Selected Node Info</div>
<svg class="a" style="left:1596px;top:244px;" width="16" height="16" viewBox="0 0 16 16"><circle cx="8" cy="8" r="7" fill="#fff" stroke="#cdd6e2"/><path d="M5 7.5l3-3 3 3M5 11l3-3 3 3" fill="none" stroke="#1a5aa0" stroke-width="1.2"/></svg>
<div class="a" style="left:1418px;top:267px;width:200px;height:25px;background:linear-gradient(90deg,#ffffff,#e9edf3)"></div>
<div class="t" style="left:1431px;top:274px;letter-spacing:-0.233px;color:#17559a;font-weight:bold;">Graph Properties</div>
<svg class="a" style="left:1596px;top:271px;" width="16" height="16" viewBox="0 0 16 16"><circle cx="8" cy="8" r="7" fill="#fff" stroke="#cdd6e2"/><path d="M5 7.5l3-3 3 3M5 11l3-3 3 3" fill="none" stroke="#1a5aa0" stroke-width="1.2"/></svg>
<div class="a" style="left:1419px;top:293px;width:197px;height:30px;background:#fff;border:1px solid #a0a0a0"></div>
<div class="a" style="left:1420px;top:294px;width:12px;height:28px;background:#fff"></div>
<div class="a" style="left:1450px;top:294px;width:1px;height:28px;background:#d0d0d0"></div>
<div class="a" style="left:1547px;top:294px;width:1px;height:28px;background:#d0d0d0"></div>
<div class="a" style="left:1420px;top:308px;width:195px;height:1px;background:#d8d8d8"></div>
<div class="t" style="left:1439px;top:295px;color:#1a8a1a;font-size:11px;font-weight:bold;">?</div>
<div class="t" style="left:1452px;top:295px;letter-spacing:-0.401px;font-size:11px;">Enabled</div>
<div class="a" style="left:1551px;top:296px;width:11px;height:11px;background:#fff;border:1px solid #333"></div>
<svg class="a" style="left:1552px;top:297px;" width="9" height="9" viewBox="0 0 9 9"><path d="M1.5 4.5l2 2.5L7.5 1.5" fill="none" stroke="#000" stroke-width="1.2"/></svg>
<div class="t" style="left:1565px;top:295px;letter-spacing:-0.406px;font-size:11px;">True</div>
<div class="t" style="left:1452px;top:309px;letter-spacing:-0.189px;font-size:11px;">MultiPlayer Options</div>
<div class="t" style="left:1549px;top:309px;letter-spacing:-0.176px;font-size:11px;">ClientServer</div>
<div class="a" style="left:1418px;top:323px;width:200px;height:20px;background:#e9edf3"></div>
<div class="t" style="left:1419px;top:327px;color:#222;">Description:</div>
<div class="a" style="left:1418px;top:342px;width:199px;height:65px;background:#fff;border:1px solid #7a7a7a;border-bottom:none"></div>
<div class="a" style="left:1619px;top:214px;width:16px;height:193px;background:#f0f0f0"></div>
<svg class="a" style="left:1622px;top:219px;" width="10" height="6" viewBox="0 0 10 6"><path d="M1 5L5 1l4 4" fill="none" stroke="#555" stroke-width="1.3"/></svg>
<div class="a" style="left:1620px;top:231px;width:15px;height:135px;background:#cdcdcd"></div>
<svg class="a" style="left:1622px;top:395px;" width="10" height="6" viewBox="0 0 10 6"><path d="M1 1l4 4 4-4" fill="none" stroke="#555" stroke-width="1.3"/></svg>
<div class="a" style="left:1414px;top:412px;width:222px;height:23px;background:linear-gradient(#fbfbfb,#efefef)"></div>
<div class="a" style="left:1421px;top:416px;width:2px;height:2px;background:#b4b4b4"></div>
<div class="a" style="left:1421px;top:420px;width:2px;height:2px;background:#b4b4b4"></div>
<div class="a" style="left:1421px;top:424px;width:2px;height:2px;background:#b4b4b4"></div>
<div class="a" style="left:1421px;top:428px;width:2px;height:2px;background:#b4b4b4"></div>
<div class="a" style="left:1421px;top:432px;width:2px;height:2px;background:#b4b4b4"></div>
<div class="t" style="left:1430px;top:417px;letter-spacing:-0.703px;">Search</div>
<svg class="a" style="left:1604px;top:418px;" width="8" height="10" viewBox="0 0 8 10"><path d="M1.5 0.5h5v5h-5zM0 5.5h8M4 6v4" fill="none" stroke="#000" stroke-width="1.2"/></svg>
<svg class="a" style="left:1619px;top:419px;" width="9" height="9" viewBox="0 0 9 9"><path d="M1 1L8 8M8 1L1 8" stroke="#000" stroke-width="1.4"/></svg>
<div class="t" style="left:1421px;top:448px;letter-spacing:-0.020px;font-size:11px;">Find what:</div>
<div class="a" style="left:1478px;top:444px;width:151px;height:21px;background:#fff;border:1px solid #7a7a7a"></div>
<svg class="a" style="left:1614px;top:451px;" width="10" height="6" viewBox="0 0 10 6"><path d="M1 1l4 4 4-4" fill="none" stroke="#333" stroke-width="1.1"/></svg>
<div class="t" style="left:1421px;top:475px;letter-spacing:-0.223px;font-size:11px;">Look in:</div>
<div class="a" style="left:1478px;top:470px;width:151px;height:20px;background:#e5e5e5;border:1px solid #adadad"></div>
<div class="t" style="left:1481px;top:475px;letter-spacing:0.052px;font-size:11px;">Current</div>
<svg class="a" style="left:1614px;top:477px;" width="10" height="6" viewBox="0 0 10 6"><path d="M1 1l4 4 4-4" fill="none" stroke="#333" stroke-width="1.1"/></svg>
<div class="t" style="left:1421px;top:500px;letter-spacing:-0.308px;font-size:11px;">Special:</div>
<div class="a" style="left:1478px;top:496px;width:151px;height:20px;background:#e5e5e5;border:1px solid #adadad"></div>
<div class="t" style="left:1482px;top:500px;font-size:11px;">---</div>
<svg class="a" style="left:1614px;top:503px;" width="10" height="6" viewBox="0 0 10 6"><path d="M1 1l4 4 4-4" fill="none" stroke="#333" stroke-width="1.1"/></svg>
<div class="a" style="left:1421px;top:521px;width:13px;height:13px;background:#fff;border:1px solid #333"></div>
<div class="t" style="left:1437px;top:520px;letter-spacing:-0.104px;font-size:11px;">Include Ports</div>
<div class="a" style="left:1421px;top:537px;width:13px;height:13px;background:#fff;border:1px solid #333"></div>
<div class="t" style="left:1437px;top:536px;letter-spacing:-0.185px;font-size:11px;">Include Values</div>
<div class="a" style="left:1421px;top:553px;width:13px;height:13px;background:#fff;border:1px solid #333"></div>
<svg class="a" style="left:1423px;top:555px;" width="9" height="9" viewBox="0 0 9 9"><path d="M1 4.5l2.5 3L8 1.5" fill="none" stroke="#222" stroke-width="1.2"/></svg>
<div class="t" style="left:1437px;top:552px;letter-spacing:-0.110px;font-size:11px;">Include Entities</div>
<div class="a" style="left:1421px;top:569px;width:13px;height:13px;background:#fff;border:1px solid #333"></div>
<div class="t" style="left:1437px;top:568px;letter-spacing:-0.106px;font-size:11px;">Include IDs</div>
<div class="a" style="left:1555px;top:561px;width:73px;height:22px;background:#e1e1e1;border:2px solid #0078d7"></div>
<div class="t" style="left:1573px;top:565px;letter-spacing:-0.354px;font-size:11px;">Find All</div>
<div class="a" style="left:1414px;top:616px;width:222px;height:24px;background:linear-gradient(#fbfbfb,#efefef)"></div>
<div class="a" style="left:1421px;top:621px;width:2px;height:2px;background:#b4b4b4"></div>
<div class="a" style="left:1421px;top:625px;width:2px;height:2px;background:#b4b4b4"></div>
<div class="a" style="left:1421px;top:629px;width:2px;height:2px;background:#b4b4b4"></div>
<div class="a" style="left:1421px;top:633px;width:2px;height:2px;background:#b4b4b4"></div>
<div class="a" style="left:1421px;top:637px;width:2px;height:2px;background:#b4b4b4"></div>
<div class="t" style="left:1430px;top:622px;letter-spacing:-0.536px;">SearchResults</div>
<svg class="a" style="left:1604px;top:622px;" width="8" height="10" viewBox="0 0 8 10"><path d="M1.5 0.5h5v5h-5zM0 5.5h8M4 6v4" fill="none" stroke="#000" stroke-width="1.2"/></svg>
<svg class="a" style="left:1619px;top:623px;" width="9" height="9" viewBox="0 0 9 9"><path d="M1 1L8 8M8 1L1 8" stroke="#000" stroke-width="1.4"/></svg>
<div class="a" style="left:1416px;top:640px;width:219px;height:256px;background:#fff;border-top:1px solid #6a6a6a;border-left:1px solid #6a6a6a"></div>
<div class="a" style="left:1417px;top:641px;width:218px;height:22px;background:#f0f0f0"></div>
<div class="a" style="left:1417px;top:662px;width:218px;height:2px;background:#d4d4d4"></div>
<div class="t" style="left:1420px;top:644px;">Node</div>
<div class="a" style="left:1525px;top:644px;width:1px;height:17px;background:#c8c8c8"></div>
<div class="t" style="left:1529px;top:644px;">Context</div>
<div class="a" style="left:1632px;top:641px;width:3px;height:22px;background:#b8b8b8"></div>
<div class="t" style="left:1453px;top:671px;letter-spacing:-0.155px;color:#222;">There are no items to show.</div>
<div class="a" style="left:1639px;top:75px;width:281px;height:945px;background:#f0f0f0"></div>
<div class="a" style="left:1643px;top:133px;width:1px;height:886px;background:#dcdcdc"></div>
<div class="a" style="left:1649px;top:80px;width:1px;height:2px;background:#c4c4c4"></div>
<div class="a" style="left:1649px;top:83px;width:1px;height:2px;background:#c4c4c4"></div>
<div class="a" style="left:1649px;top:86px;width:1px;height:2px;background:#c4c4c4"></div>
<div class="a" style="left:1649px;top:89px;width:1px;height:2px;background:#c4c4c4"></div>
<div class="a" style="left:1649px;top:92px;width:1px;height:2px;background:#c4c4c4"></div>
<div class="a" style="left:1649px;top:95px;width:1px;height:2px;background:#c4c4c4"></div>
<div class="t" style="left:1657px;top:81px;letter-spacing:-0.300px;color:#222;">RollupBar</div>
<svg class="a" style="left:1889px;top:82px;" width="8" height="10" viewBox="0 0 8 10"><path d="M1.5 0.5h5v5h-5zM0 5.5h8M4 6v4" fill="none" stroke="#000" stroke-width="1.2"/></svg>
<svg class="a" style="left:1904px;top:83px;" width="9" height="9" viewBox="0 0 9 9"><path d="M1 1L8 8M8 1L1 8" stroke="#000" stroke-width="1.4"/></svg>
<div class="a" style="left:1643px;top:125px;width:275px;height:6px;background:#fff"></div>
<div class="a" style="left:1643px;top:100px;width:45px;height:26px;background:#fff;border:1px solid #e0e0e0;border-bottom:none"></div>
<div class="a" style="left:1688px;top:102px;width:41px;height:24px;background:#f0f0f0;border:1px solid #dcdcdc;border-bottom:none"></div>
<div class="a" style="left:1728px;top:102px;width:43px;height:24px;background:#f0f0f0;border:1px solid #dcdcdc;border-bottom:none"></div>
<div class="a" style="left:1770px;top:102px;width:43px;height:24px;background:#f0f0f0;border:1px solid #dcdcdc;border-bottom:none"></div>
<div class="a" style="left:1812px;top:102px;width:41px;height:24px;background:#f0f0f0;border:1px solid #dcdcdc;border-bottom:none"></div>
<svg class="a" style="left:1650px;top:104px;" width="24" height="20" viewBox="0 0 24 20"><circle cx="4" cy="4" r="3" fill="#eef2c8" stroke="#c8cc90"/><path d="M3.5 3h9.5a1.6 1.6 0 0 1 0 3.2H10" fill="#fff" stroke="#000" stroke-width="1.5"/><path d="M9 6.5h6a2.5 2.5 0 0 1 2.5 2.5v5.5a2.5 2.5 0 0 1-2.5 2.5h-5l-2-2.5V9z" fill="#f4f4f4" stroke="#000" stroke-width="1.5"/><path d="M12 9v5M14.5 9v5" stroke="#666" stroke-width="1"/><path d="M7 11h3M7 14h3" stroke="#000" stroke-width="1.5"/><text x="0" y="19.5" font-size="7.5" font-weight="bold" fill="#8a0a0a" font-family="Liberation Mono">NEW</text></svg>
<svg class="a" style="left:1695px;top:104px;" width="20" height="20" viewBox="0 0 20 20"><path d="M7 1.5l4 1 3 3 4 3v6l-7 4.5-3-2-6-4.5-.5-6z" fill="#3cb83c" stroke="#143014" stroke-width="1.4"/><path d="M4 6l5-2 4 3-2 4-4 1z" fill="#62d862"/><path d="M11 12l6-3" stroke="#1a5a1a"/></svg>
<svg class="a" style="left:1736px;top:104px;" width="22" height="21" viewBox="0 0 22 21"><path d="M3.5 16.5L14.5 3.5l4.5 3.5L8 20z" fill="#f6c48e" stroke="#9a6a3a" stroke-width="1"/><path d="M14.5 3.5l4.5 3.5 1.8-2.2-4.5-3.5z" fill="#5aa0e0" stroke="#d06a3a" stroke-width="1"/><path d="M3.5 16.5L8 20l-5.5 1z" fill="#f0e0c0"/><path d="M2.5 19.5l1.5-2 1.8 1.5z" fill="#1a2a8a"/></svg>
<svg class="a" style="left:1778px;top:104px;" width="20" height="21" viewBox="0 0 20 21"><rect x="1" y="1" width="18" height="15" rx="2" fill="#3a3a3a" stroke="#000"/><rect x="3.5" y="3.5" width="13" height="9.5" fill="#30a8e0"/><path d="M9 13V6l3 2 2-1 1 3 1 3z" fill="#e8a020"/><path d="M10 5l2 3-2 2z" fill="#40b040"/><rect x="5" y="16.5" width="10" height="3.5" fill="#222"/></svg>
<svg class="a" style="left:1821px;top:105px;" width="20" height="18" viewBox="0 0 20 18"><path d="M10 1l9 4.5-9 4.5-9-4.5z" fill="#2a7ad0" stroke="#123" stroke-width="1"/><path d="M1 8.5l9 4.5 9-4.5" fill="none" stroke="#e07a20" stroke-width="2.2"/><path d="M1 11.5l9 4.5 9-4.5" fill="none" stroke="#48a048" stroke-width="2.2"/><path d="M1 5.5l9 4.5 9-4.5" fill="none" stroke="#0c2030" stroke-width=".8"/></svg>
<div class="a" style="left:1647px;top:140px;width:258px;height:150px;border:1px solid #dcdcdc"></div>
<div class="a" style="left:1651px;top:132px;width:248px;height:16px;background:#e1e1e1;border:1px solid #adadad"></div>
<div class="t" style="left:1755px;top:134px;letter-spacing:-0.662px;">Objects</div>
<div class="a" style="left:1656px;top:154px;width:88px;height:18px;background:#e1e1e1;border:1px solid #adadad"></div>
<div class="t" style="left:1694px;top:156px;letter-spacing:0.094px;font-size:11px;">AI</div>
<div class="a" style="left:1751px;top:154px;width:88px;height:18px;background:#e1e1e1;border:1px solid #adadad"></div>
<div class="t" style="left:1754px;top:156px;letter-spacing:-0.010px;font-size:11px;">Archetype Entity</div>
<div class="a" style="left:1656px;top:176px;width:88px;height:18px;background:#e1e1e1;border:1px solid #adadad"></div>
<div class="t" style="left:1688px;top:178px;letter-spacing:-0.250px;font-size:11px;">Area</div>
<div class="a" style="left:1751px;top:176px;width:88px;height:18px;background:#e1e1e1;border:1px solid #adadad"></div>
<div class="t" style="left:1781px;top:178px;letter-spacing:-0.513px;font-size:11px;">Brush</div>
<div class="a" style="left:1656px;top:198px;width:88px;height:18px;background:#e1e1e1;border:1px solid #adadad"></div>
<div class="t" style="left:1681px;top:200px;letter-spacing:-0.485px;font-size:11px;">Camera</div>
<div class="a" style="left:1751px;top:198px;width:88px;height:18px;background:#e1e1e1;border:1px solid #adadad"></div>
<div class="t" style="left:1781px;top:200px;letter-spacing:0.034px;font-size:11px;">Entity</div>
<div class="a" style="left:1656px;top:220px;width:88px;height:18px;background:#e1e1e1;border:1px solid #adadad"></div>
<div class="t" style="left:1671px;top:222px;letter-spacing:-0.306px;font-size:11px;">Geom Entity</div>
<div class="a" style="left:1751px;top:220px;width:88px;height:18px;background:#e1e1e1;border:1px solid #adadad"></div>
<div class="t" style="left:1784px;top:222px;letter-spacing:-0.765px;font-size:11px;">Misc</div>
<div class="a" style="left:1656px;top:242px;width:88px;height:18px;background:#e1e1e1;border:1px solid #adadad"></div>
<div class="t" style="left:1681px;top:244px;letter-spacing:-0.206px;font-size:11px;">Prefabs</div>
<div class="a" style="left:1751px;top:242px;width:88px;height:18px;background:#e1e1e1;border:1px solid #adadad"></div>
<div class="t" style="left:1784px;top:244px;letter-spacing:-0.692px;font-size:11px;">Solid</div>
<div class="a" style="left:1656px;top:264px;width:88px;height:18px;background:#e1e1e1;border:1px solid #adadad"></div>
<div class="t" style="left:1685px;top:266px;letter-spacing:-0.536px;font-size:11px;">Sound</div>
<div class="a" style="left:1907px;top:133px;width:11px;height:885px;background:#93b3b0;border-left:1px solid #fafafa;border-right:1px solid #5e6e6e"></div>
<div class="a" style="left:1643px;top:1018px;width:265px;height:1px;background:#d4d4d4"></div>
<div class="a" style="left:0px;top:994px;width:1642px;height:26px;background:#f0f0f0"></div>
<div class="a" style="left:3px;top:997px;width:215px;height:20px;background:#efefef;border-top:1px solid #a0a0a0;border-left:1px solid #a0a0a0;border-right:1px solid #fff;border-bottom:1px solid #fff"></div>
<div class="t" style="left:14px;top:1001px;letter-spacing:-0.337px;font-size:11px;">No Selection</div>
<div class="a" style="left:225px;top:998px;width:81px;height:18px;background:#d4d4d4;border:1px solid #c8c8c8"></div>
<div class="t" style="left:231px;top:1001px;letter-spacing:-0.400px;color:#777;font-size:11px;">Lock Selection</div>
<div class="t" style="left:311px;top:1001px;font-size:11px;">X</div>
<div class="a" style="left:323px;top:997px;width:57px;height:20px;background:#f0f0f0;border:1px solid #d8d8d8"></div>
<div class="t" style="left:329px;top:1001px;letter-spacing:0.125px;color:#555;font-size:11px;">1129.417</div>
<div class="t" style="left:392px;top:1001px;font-size:11px;">Y</div>
<div class="a" style="left:404px;top:997px;width:57px;height:20px;background:#f0f0f0;border:1px solid #d8d8d8"></div>
<div class="t" style="left:410px;top:1001px;letter-spacing:-0.018px;color:#555;font-size:11px;">1177.519</div>
<div class="t" style="left:473px;top:1001px;font-size:11px;">Z</div>
<div class="a" style="left:485px;top:997px;width:57px;height:20px;background:#f0f0f0;border:1px solid #d8d8d8"></div>
<div class="t" style="left:496px;top:1001px;letter-spacing:-0.052px;color:#555;font-size:11px;">26.9875</div>
<div class="a" style="left:555px;top:997px;width:17px;height:20px;background:#f0f0f0;border-left:1px solid #999;border-bottom:1px solid #999"></div>
<svg class="a" style="left:557px;top:999px;" width="12" height="15" viewBox="0 0 12 15"><path d="M3 7V4.5a3 3 0 0 1 6 0V7" fill="none" stroke="#333" stroke-width="1.5"/><rect x="1" y="7" width="10" height="8" rx="1" fill="#444"/><path d="M3 9h6M3 11h6M3 13h6" stroke="#888" stroke-width=".7"/></svg>
<div class="t" style="left:572px;top:1001px;letter-spacing:-0.381px;font-size:11px;">Speed:</div>
<div class="a" style="left:612px;top:997px;width:31px;height:20px;background:#fff;border:1px solid #7a7a7a"></div>
<div class="t" style="left:631px;top:1001px;font-size:11px;">1</div>
<div class="a" style="left:644px;top:997px;width:10px;height:20px;background:#f0f0f0;border:1px solid #aaa"></div>
<svg class="a" style="left:645px;top:999px;" width="8" height="16" viewBox="0 0 8 16"><path d="M1 5l3-3 3 3z M1 11l3 3 3-3z" fill="#000"/></svg>
<div class="a" style="left:657px;top:997px;width:24px;height:20px;background:#f8f000;border:1px solid #888"></div>
<svg class="a" style="left:658px;top:998px;" width="22" height="18" viewBox="0 0 22 18"><path d="M4 17V10q4-4 8-2t9-3V17z" fill="#1a8a1a"/><circle cx="17" cy="5" r="2.5" fill="#e03010"/><circle cx="8" cy="14" r="2" fill="#e03010"/></svg>
<div class="a" style="left:693px;top:998px;width:73px;height:18px;background:#e1e1e1;border:1px solid #adadad"></div>
<div class="t" style="left:704px;top:1001px;letter-spacing:-0.208px;font-size:11px;">AI/Physics</div>
<div class="a" style="left:777px;top:998px;width:81px;height:18px;background:#e1e1e1;border:1px solid #adadad"></div>
<div class="t" style="left:780px;top:1001px;letter-spacing:-0.315px;font-size:11px;">No Sync Player</div>
<div class="a" style="left:870px;top:998px;width:60px;height:18px;background:#e1e1e1;border:1px solid #adadad"></div>
<div class="t" style="left:878px;top:1001px;font-size:11px;">Goto position</div>
<div class="a" style="left:0px;top:1020px;width:1920px;height:20px;background:#f0f0f0"></div>
<div class="t" style="left:2px;top:1024px;letter-spacing:-0.128px;font-size:11px;">Ready</div>
<div class="a" style="left:1713px;top:1022px;width:1px;height:17px;background:#dcdcdc"></div>
<div class="a" style="left:1805px;top:1022px;width:1px;height:17px;background:#dcdcdc"></div>
<div class="a" style="left:1841px;top:1022px;width:1px;height:17px;background:#dcdcdc"></div>
<div class="a" style="left:1881px;top:1022px;width:1px;height:17px;background:#dcdcdc"></div>
<div class="t" style="left:1740px;top:1024px;letter-spacing:0.193px;font-size:11px;">1537 Mb</div>
<div class="t" style="left:1811px;top:1024px;letter-spacing:-0.312px;color:#8a8a8a;font-size:11px;">CAP</div>
<div class="t" style="left:1846px;top:1024px;letter-spacing:0.984px;font-size:11px;">NUM</div>
<div class="t" style="left:1885px;top:1024px;letter-spacing:-0.948px;color:#8a8a8a;font-size:11px;">SCRL</div>
<div class="a" style="left:0px;top:1040px;width:1920px;height:40px;background:linear-gradient(90deg,#1f0a22,#22102a 40%,#1c0b22 70%,#1f0c24)"></div>
<svg class="a" style="left:16px;top:1051px;" width="17" height="17" viewBox="0 0 17 17"><path d="M0 2.3L7 1.3V8H0zM8 1.1L17 0v8H8zM0 9h7v6.7L0 14.7zM8 9h9v8L8 15.9z" fill="#fff"/></svg>
<svg class="a" style="left:63px;top:1050px;" width="19" height="19" viewBox="0 0 19 19"><circle cx="11" cy="8" r="6" fill="none" stroke="#fff" stroke-width="1.6"/><path d="M7 12L1 18" stroke="#fff" stroke-width="1.8"/></svg>
<svg class="a" style="left:112px;top:1050px;" width="22" height="19" viewBox="0 0 22 19"><path d="M0 3h8l2 2h12v14H0z" fill="#e8b820"/><path d="M0 7h22v12H0z" fill="#f8d050"/><path d="M6 13h10v4H6z" fill="#2a80d0"/></svg>
<svg class="a" style="left:160px;top:1049px;" width="24" height="22" viewBox="0 0 24 22"><path d="M2 12q0-9 10-9t10 8q0 4-4 3t-3 3-5 3Q2 20 2 12z" fill="#e8e0d0" stroke="#aaa"/><circle cx="8" cy="8" r="2" fill="#e33"/><circle cx="13" cy="6" r="2" fill="#3a3"/><circle cx="6" cy="13" r="2" fill="#38d"/><path d="M14 16L23 1" stroke="#c87a30" stroke-width="2.5"/></svg>
<svg class="a" style="left:209px;top:1048px;" width="24" height="24" viewBox="0 0 24 24"><path d="M12 12L2.04 6.25A11.5 11.5 0 0 1 21.96 6.25z" fill="#db4437"/><path d="M12 12L21.96 6.25A11.5 11.5 0 0 1 12 23.5z" fill="#ffcd40"/><path d="M12 12L12 23.5A11.5 11.5 0 0 1 2.04 6.25z" fill="#0f9d58"/><circle cx="12" cy="12" r="5.5" fill="#fff"/><circle cx="12" cy="12" r="4.3" fill="#4285f4"/></svg>
<svg class="a" style="left:258px;top:1048px;" width="24" height="24" viewBox="0 0 24 24"><ellipse cx="12" cy="12" rx="11" ry="11.5" fill="none" stroke="#c8102e" stroke-width="2.5"/><ellipse cx="12" cy="12" rx="5" ry="9" fill="none" stroke="#c8102e" stroke-width="2.5"/></svg>
<svg class="a" style="left:308px;top:1049px;" width="23" height="22" viewBox="0 0 23 22"><rect x="0.5" y="0.5" width="22" height="21" rx="2" fill="#001e36" stroke="#31a8ff"/><text x="3" y="16" font-size="12" font-weight="bold" fill="#31a8ff" font-family="Liberation Sans">Ps</text></svg>
<div class="a" style="left:491px;top:1040px;width:48px;height:40px;background:#4a1c52"></div>
<svg class="a" style="left:356px;top:1048px;" width="25" height="24" viewBox="0 0 25 24"><defs><linearGradient id="eg" x1="0" y1="0" x2="0" y2="1"><stop offset="0" stop-color="#e8e8e8"/><stop offset=".5" stop-color="#9a9a9a"/><stop offset="1" stop-color="#d0d0d0"/></linearGradient></defs><path d="M1 1h23v5H9v4h12v4H9v4h15v5H1z" fill="url(#eg)" stroke="#555"/></svg>
<svg class="a" style="left:502px;top:1048px;" width="25" height="24" viewBox="0 0 25 24"><defs><linearGradient id="eg" x1="0" y1="0" x2="0" y2="1"><stop offset="0" stop-color="#e8e8e8"/><stop offset=".5" stop-color="#9a9a9a"/><stop offset="1" stop-color="#d0d0d0"/></linearGradient></defs><path d="M1 1h23v5H9v4h12v4H9v4h15v5H1z" fill="url(#eg)" stroke="#555"/></svg>
<svg class="a" style="left:405px;top:1050px;" width="24" height="19" viewBox="0 0 24 19"><path d="M4 2q8-3 16 0l3 10q-1 4-6 6l-1-3q-4 1-8 0l-1 3q-5-2-6-6z" fill="#7289da"/><circle cx="9" cy="10" r="2" fill="#fff"/><circle cx="15" cy="10" r="2" fill="#fff"/></svg>
<svg class="a" style="left:453px;top:1048px;" width="25" height="24" viewBox="0 0 25 24"><path d="M18 0L25 3v18l-7 3L7 14l-4 3-3-1.5V8.5L3 7l4 3zM18 6.5l-6 5.5 6 5.5z" fill="#8a5cd6"/></svg>
<div class="a" style="left:103px;top:1078px;width:40px;height:2px;background:#c8a4d8"></div>
<div class="a" style="left:152px;top:1078px;width:39px;height:2px;background:#c8a4d8"></div>
<div class="a" style="left:201px;top:1078px;width:40px;height:2px;background:#c8a4d8"></div>
<div class="a" style="left:397px;top:1078px;width:40px;height:2px;background:#c8a4d8"></div>
<div class="a" style="left:445px;top:1078px;width:41px;height:2px;background:#c8a4d8"></div>
<div class="a" style="left:491px;top:1078px;width:47px;height:2px;background:#c8a4d8"></div>
<svg class="a" style="left:1747px;top:1055px;" width="13" height="8" viewBox="0 0 13 8"><path d="M1 7l5.5-5.5L12 7" fill="none" stroke="#fff" stroke-width="1.3"/></svg>
<svg class="a" style="left:1772px;top:1052px;" width="11" height="17" viewBox="0 0 11 17"><rect x="2.5" y="0.5" width="6" height="10" rx="3" fill="#fff"/><path d="M1 7q0 5 4.5 5T10 7M5.5 12v4M2.5 16h6" fill="none" stroke="#fff" stroke-width="1.2"/></svg>
<svg class="a" style="left:1793px;top:1052px;" width="17" height="16" viewBox="0 0 17 16"><rect x="4.5" y="3.5" width="12" height="9" fill="none" stroke="#fff"/><path d="M10 13v2M7 15h7M0.5 0.5h5v7h-5" fill="none" stroke="#fff"/></svg>
<div class="t" style="left:1821px;top:1054px;color:#fff;">РУС</div>
<div class="t" style="left:1869px;top:1045px;color:#fff;">14:55</div>
<div class="t" style="left:1856px;top:1063px;color:#fff;">05.11.2020</div>
<div class="a" style="left:1918px;top:1040px;width:2px;height:40px;background:#5a4a60"></div>
<div class="a" style="left:696px;top:412px;width:216px;height:328px;background:#f0f0f0;border:1px solid #c8c8c8;box-shadow:2px 2px 3px rgba(0,0,0,.3)"></div>
<div class="a" style="left:699px;top:415px;width:213px;height:22px;background:#91c9f7"></div>
<svg class="a" style="left:900px;top:422px;" width="5" height="9" viewBox="0 0 5 9"><path d="M0.7 0.7l3.8 3.8-3.8 3.8" fill="none" stroke="#3a3a3a" stroke-width="1.3"/></svg>
<div class="t" style="left:731px;top:419px;">Add Node</div>
<div class="t" style="left:731px;top:441px;">Add Selected Entity</div>
<div class="t" style="left:731px;top:463px;">Add Graph Default Entity</div>
<div class="t" style="left:731px;top:485px;">Add Comment</div>
<div class="a" style="left:727px;top:506px;width:185px;height:1px;background:#d7d7d7"></div>
<div class="t" style="left:731px;top:514px;">Cut</div>
<div class="t" style="left:731px;top:536px;">Copy</div>
<div class="t" style="left:731px;top:558px;">Paste</div>
<div class="t" style="left:731px;top:580px;">Paste with Links</div>
<div class="t" style="left:731px;top:602px;">Delete</div>
<div class="a" style="left:727px;top:623px;width:185px;height:1px;background:#d7d7d7"></div>
<div class="t" style="left:731px;top:631px;">Export Selected</div>
<div class="t" style="left:731px;top:653px;">Import</div>
<div class="t" style="left:731px;top:675px;">Select Assigned Entity</div>
<div class="a" style="left:699px;top:694px;width:22px;height:21px;background:#91c9f7"></div>
<svg class="a" style="left:703px;top:697px;" width="13" height="11" viewBox="0 0 13 11"><path d="M1.5 5.5l3.5 3.5 6.5-7" fill="none" stroke="#222" stroke-width="1.3"/></svg>
<div class="t" style="left:731px;top:697px;">Show Spline Arrows</div>
<div class="t" style="left:731px;top:719px;">Fit Graph to View</div>
<div class="a" style="left:911px;top:304px;width:193px;height:776px;background:#f0f0f0;border:1px solid #c8c8c8;box-shadow:2px 2px 3px rgba(0,0,0,.3)"></div>
<div class="t" style="left:946px;top:311px;">AI</div>
<svg class="a" style="left:1087px;top:314px;" width="5" height="9" viewBox="0 0 5 9"><path d="M0.7 0.7l3.8 3.8-3.8 3.8" fill="none" stroke="#3a3a3a" stroke-width="1.3"/></svg>
<div class="t" style="left:946px;top:333px;">AnimatedCharacter</div>
<svg class="a" style="left:1087px;top:336px;" width="5" height="9" viewBox="0 0 5 9"><path d="M0.7 0.7l3.8 3.8-3.8 3.8" fill="none" stroke="#3a3a3a" stroke-width="1.3"/></svg>
<div class="t" style="left:946px;top:355px;">Animations</div>
<svg class="a" style="left:1087px;top:358px;" width="5" height="9" viewBox="0 0 5 9"><path d="M0.7 0.7l3.8 3.8-3.8 3.8" fill="none" stroke="#3a3a3a" stroke-width="1.3"/></svg>
<div class="t" style="left:946px;top:377px;">Camera</div>
<svg class="a" style="left:1087px;top:380px;" width="5" height="9" viewBox="0 0 5 9"><path d="M0.7 0.7l3.8 3.8-3.8 3.8" fill="none" stroke="#3a3a3a" stroke-width="1.3"/></svg>
<div class="t" style="left:946px;top:399px;">Crysis</div>
<svg class="a" style="left:1087px;top:402px;" width="5" height="9" viewBox="0 0 5 9"><path d="M0.7 0.7l3.8 3.8-3.8 3.8" fill="none" stroke="#3a3a3a" stroke-width="1.3"/></svg>
<div class="t" style="left:946px;top:421px;">CrysisFX</div>
<svg class="a" style="left:1087px;top:424px;" width="5" height="9" viewBox="0 0 5 9"><path d="M0.7 0.7l3.8 3.8-3.8 3.8" fill="none" stroke="#3a3a3a" stroke-width="1.3"/></svg>
<div class="t" style="left:946px;top:443px;">Dialog</div>
<svg class="a" style="left:1087px;top:446px;" width="5" height="9" viewBox="0 0 5 9"><path d="M0.7 0.7l3.8 3.8-3.8 3.8" fill="none" stroke="#3a3a3a" stroke-width="1.3"/></svg>
<div class="t" style="left:946px;top:465px;">Effects</div>
<svg class="a" style="left:1087px;top:468px;" width="5" height="9" viewBox="0 0 5 9"><path d="M0.7 0.7l3.8 3.8-3.8 3.8" fill="none" stroke="#3a3a3a" stroke-width="1.3"/></svg>
<div class="t" style="left:946px;top:487px;">Engine</div>
<svg class="a" style="left:1087px;top:490px;" width="5" height="9" viewBox="0 0 5 9"><path d="M0.7 0.7l3.8 3.8-3.8 3.8" fill="none" stroke="#3a3a3a" stroke-width="1.3"/></svg>
<div class="t" style="left:946px;top:509px;">Entity</div>
<svg class="a" style="left:1087px;top:512px;" width="5" height="9" viewBox="0 0 5 9"><path d="M0.7 0.7l3.8 3.8-3.8 3.8" fill="none" stroke="#3a3a3a" stroke-width="1.3"/></svg>
<div class="t" style="left:946px;top:531px;">Environment</div>
<svg class="a" style="left:1087px;top:534px;" width="5" height="9" viewBox="0 0 5 9"><path d="M0.7 0.7l3.8 3.8-3.8 3.8" fill="none" stroke="#3a3a3a" stroke-width="1.3"/></svg>
<div class="a" style="left:914px;top:549px;width:184px;height:22px;background:#91c9f7"></div>
<div class="t" style="left:946px;top:553px;">Game</div>
<svg class="a" style="left:1087px;top:556px;" width="5" height="9" viewBox="0 0 5 9"><path d="M0.7 0.7l3.8 3.8-3.8 3.8" fill="none" stroke="#3a3a3a" stroke-width="1.3"/></svg>
<div class="t" style="left:946px;top:575px;">HUD</div>
<svg class="a" style="left:1087px;top:578px;" width="5" height="9" viewBox="0 0 5 9"><path d="M0.7 0.7l3.8 3.8-3.8 3.8" fill="none" stroke="#3a3a3a" stroke-width="1.3"/></svg>
<div class="t" style="left:946px;top:597px;">Image</div>
<svg class="a" style="left:1087px;top:600px;" width="5" height="9" viewBox="0 0 5 9"><path d="M0.7 0.7l3.8 3.8-3.8 3.8" fill="none" stroke="#3a3a3a" stroke-width="1.3"/></svg>
<div class="t" style="left:946px;top:619px;">Input</div>
<svg class="a" style="left:1087px;top:622px;" width="5" height="9" viewBox="0 0 5 9"><path d="M0.7 0.7l3.8 3.8-3.8 3.8" fill="none" stroke="#3a3a3a" stroke-width="1.3"/></svg>
<div class="t" style="left:946px;top:641px;">Interpol</div>
<svg class="a" style="left:1087px;top:644px;" width="5" height="9" viewBox="0 0 5 9"><path d="M0.7 0.7l3.8 3.8-3.8 3.8" fill="none" stroke="#3a3a3a" stroke-width="1.3"/></svg>
<div class="t" style="left:946px;top:663px;">Inventory</div>
<svg class="a" style="left:1087px;top:666px;" width="5" height="9" viewBox="0 0 5 9"><path d="M0.7 0.7l3.8 3.8-3.8 3.8" fill="none" stroke="#3a3a3a" stroke-width="1.3"/></svg>
<div class="t" style="left:946px;top:685px;">Log</div>
<svg class="a" style="left:1087px;top:688px;" width="5" height="9" viewBox="0 0 5 9"><path d="M0.7 0.7l3.8 3.8-3.8 3.8" fill="none" stroke="#3a3a3a" stroke-width="1.3"/></svg>
<div class="t" style="left:946px;top:707px;">Logic</div>
<svg class="a" style="left:1087px;top:710px;" width="5" height="9" viewBox="0 0 5 9"><path d="M0.7 0.7l3.8 3.8-3.8 3.8" fill="none" stroke="#3a3a3a" stroke-width="1.3"/></svg>
<div class="t" style="left:946px;top:729px;">MaterialFX</div>
<svg class="a" style="left:1087px;top:732px;" width="5" height="9" viewBox="0 0 5 9"><path d="M0.7 0.7l3.8 3.8-3.8 3.8" fill="none" stroke="#3a3a3a" stroke-width="1.3"/></svg>
<div class="t" style="left:946px;top:751px;">Math</div>
<svg class="a" style="left:1087px;top:754px;" width="5" height="9" viewBox="0 0 5 9"><path d="M0.7 0.7l3.8 3.8-3.8 3.8" fill="none" stroke="#3a3a3a" stroke-width="1.3"/></svg>
<div class="t" style="left:946px;top:773px;">Misc</div>
<svg class="a" style="left:1087px;top:776px;" width="5" height="9" viewBox="0 0 5 9"><path d="M0.7 0.7l3.8 3.8-3.8 3.8" fill="none" stroke="#3a3a3a" stroke-width="1.3"/></svg>
<div class="t" style="left:946px;top:795px;">Mission</div>
<svg class="a" style="left:1087px;top:798px;" width="5" height="9" viewBox="0 0 5 9"><path d="M0.7 0.7l3.8 3.8-3.8 3.8" fill="none" stroke="#3a3a3a" stroke-width="1.3"/></svg>
<div class="t" style="left:946px;top:817px;">Movement</div>
<svg class="a" style="left:1087px;top:820px;" width="5" height="9" viewBox="0 0 5 9"><path d="M0.7 0.7l3.8 3.8-3.8 3.8" fill="none" stroke="#3a3a3a" stroke-width="1.3"/></svg>
<div class="t" style="left:946px;top:839px;">Multiplayer</div>
<svg class="a" style="left:1087px;top:842px;" width="5" height="9" viewBox="0 0 5 9"><path d="M0.7 0.7l3.8 3.8-3.8 3.8" fill="none" stroke="#3a3a3a" stroke-width="1.3"/></svg>
<div class="t" style="left:946px;top:861px;">NanoSuit</div>
<svg class="a" style="left:1087px;top:864px;" width="5" height="9" viewBox="0 0 5 9"><path d="M0.7 0.7l3.8 3.8-3.8 3.8" fill="none" stroke="#3a3a3a" stroke-width="1.3"/></svg>
<div class="t" style="left:946px;top:883px;">Physics</div>
<svg class="a" style="left:1087px;top:886px;" width="5" height="9" viewBox="0 0 5 9"><path d="M0.7 0.7l3.8 3.8-3.8 3.8" fill="none" stroke="#3a3a3a" stroke-width="1.3"/></svg>
<div class="t" style="left:946px;top:905px;">Sound</div>
<svg class="a" style="left:1087px;top:908px;" width="5" height="9" viewBox="0 0 5 9"><path d="M0.7 0.7l3.8 3.8-3.8 3.8" fill="none" stroke="#3a3a3a" stroke-width="1.3"/></svg>
<div class="t" style="left:946px;top:927px;">Stats</div>
<svg class="a" style="left:1087px;top:930px;" width="5" height="9" viewBox="0 0 5 9"><path d="M0.7 0.7l3.8 3.8-3.8 3.8" fill="none" stroke="#3a3a3a" stroke-width="1.3"/></svg>
<div class="t" style="left:946px;top:949px;">String</div>
<svg class="a" style="left:1087px;top:952px;" width="5" height="9" viewBox="0 0 5 9"><path d="M0.7 0.7l3.8 3.8-3.8 3.8" fill="none" stroke="#3a3a3a" stroke-width="1.3"/></svg>
<div class="t" style="left:946px;top:971px;">System</div>
<svg class="a" style="left:1087px;top:974px;" width="5" height="9" viewBox="0 0 5 9"><path d="M0.7 0.7l3.8 3.8-3.8 3.8" fill="none" stroke="#3a3a3a" stroke-width="1.3"/></svg>
<div class="t" style="left:946px;top:993px;">Time</div>
<svg class="a" style="left:1087px;top:996px;" width="5" height="9" viewBox="0 0 5 9"><path d="M0.7 0.7l3.8 3.8-3.8 3.8" fill="none" stroke="#3a3a3a" stroke-width="1.3"/></svg>
<div class="t" style="left:946px;top:1015px;">Vec3</div>
<svg class="a" style="left:1087px;top:1018px;" width="5" height="9" viewBox="0 0 5 9"><path d="M0.7 0.7l3.8 3.8-3.8 3.8" fill="none" stroke="#3a3a3a" stroke-width="1.3"/></svg>
<div class="t" style="left:946px;top:1037px;">Vehicle</div>
<svg class="a" style="left:1087px;top:1040px;" width="5" height="9" viewBox="0 0 5 9"><path d="M0.7 0.7l3.8 3.8-3.8 3.8" fill="none" stroke="#3a3a3a" stroke-width="1.3"/></svg>
<div class="t" style="left:946px;top:1059px;">Weapon</div>
<svg class="a" style="left:1087px;top:1062px;" width="5" height="9" viewBox="0 0 5 9"><path d="M0.7 0.7l3.8 3.8-3.8 3.8" fill="none" stroke="#3a3a3a" stroke-width="1.3"/></svg>
<div class="a" style="left:1099px;top:546px;width:212px;height:336px;background:#f0f0f0;border:1px solid #c8c8c8;box-shadow:2px 2px 3px rgba(0,0,0,.3)"></div>
<div class="t" style="left:1133px;top:553px;">ActorCheckHealth</div>
<div class="t" style="left:1133px;top:575px;">ActorGetHealth</div>
<div class="t" style="left:1133px;top:597px;">ActorGrabObject</div>
<div class="t" style="left:1133px;top:619px;">ActorSensor</div>
<div class="t" style="left:1133px;top:641px;">ActorSetHealth</div>
<div class="t" style="left:1133px;top:663px;">DamageActor</div>
<div class="t" style="left:1133px;top:685px;">DifficultyLevel</div>
<div class="t" style="left:1133px;top:707px;">EntityInterest</div>
<div class="t" style="left:1133px;top:729px;">GameObjectEvent</div>
<div class="t" style="left:1133px;top:751px;">LocalPlayer</div>
<div class="t" style="left:1133px;top:773px;">PlayerLink</div>
<div class="a" style="left:1101px;top:791px;width:206px;height:22px;background:#91c9f7"></div>
<div class="t" style="left:1133px;top:795px;">PlayerSetModel</div>
<div class="t" style="left:1133px;top:817px;">PlayerStaging</div>
<div class="t" style="left:1133px;top:839px;">ScriptCommand</div>
<div class="t" style="left:1133px;top:861px;">SetVehicleAltitudeLimit</div>
</body></html>
